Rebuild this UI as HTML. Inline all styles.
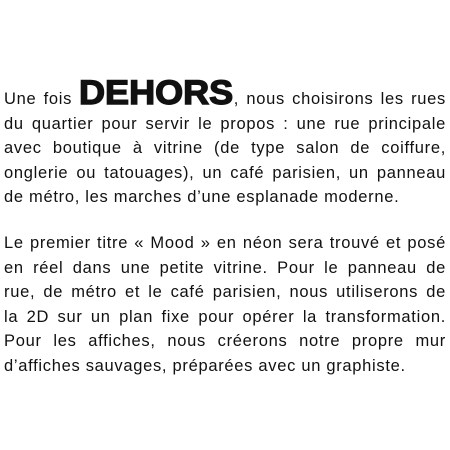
<!DOCTYPE html>
<html><head><meta charset="utf-8"><style>
html,body{margin:0;padding:0;background:#fff;width:450px;height:450px;overflow:hidden}
.p{position:absolute;left:4px;width:442px;font-family:"Liberation Sans",sans-serif;font-size:16.5px;color:#111;letter-spacing:0.7px}
.l{height:24.6px;line-height:24.6px;text-align:justify;text-align-last:justify;white-space:nowrap}
.last{text-align-last:left}
.big{font-weight:900;font-size:34px;line-height:0;letter-spacing:0px;-webkit-text-stroke:1.4px #111;display:inline-block;transform:scaleX(1.06);transform-origin:left;margin-right:9px}
</style></head><body>
<div class="p" style="top:87px">
<div class="l">Une fois <span class="big">DEHORS</span>, nous choisirons les rues</div>
<div class="l">du quartier pour servir le propos : une rue principale</div>
<div class="l">avec boutique à vitrine (de type salon de coiffure,</div>
<div class="l">onglerie ou tatouages), un café parisien, un panneau</div>
<div class="l last">de métro, les marches d’une esplanade moderne.</div>
</div>
<div class="p" style="top:231px">
<div class="l">Le premier titre « Mood » en néon sera trouvé et posé</div>
<div class="l">en réel dans une petite vitrine. Pour le panneau de</div>
<div class="l">rue, de métro et le café parisien, nous utiliserons de</div>
<div class="l">la 2D sur un plan fixe pour opérer la transformation.</div>
<div class="l">Pour les affiches, nous créerons notre propre mur</div>
<div class="l last">d’affiches sauvages, préparées avec un graphiste.</div>
</div>
</body></html>
